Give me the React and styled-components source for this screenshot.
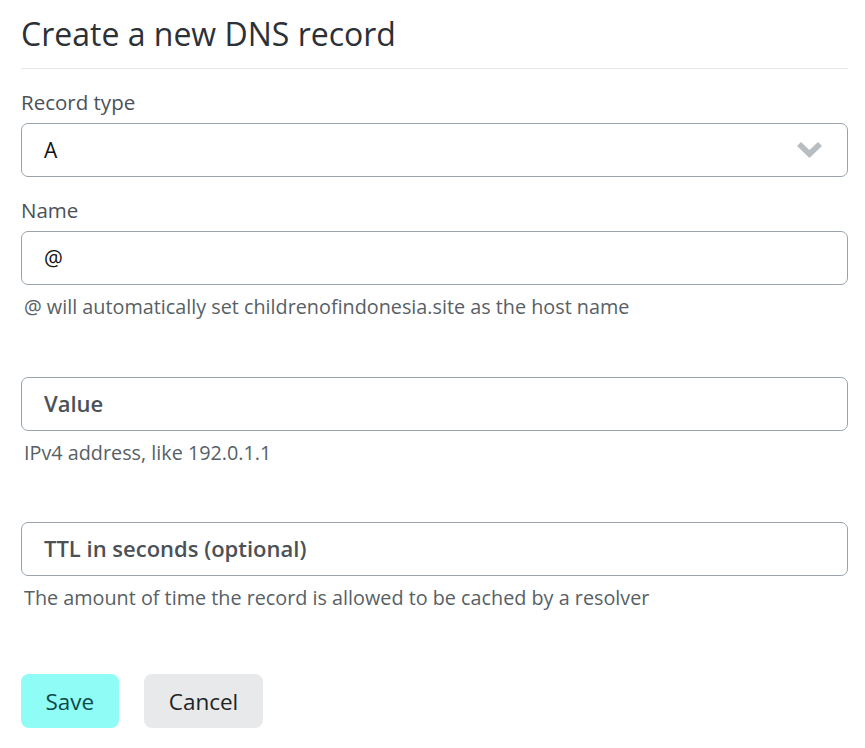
import React from "react";
import styled, { createGlobalStyle } from "styled-components";

const GlobalStyle = createGlobalStyle`
  body {
    margin: 0;
    background: #fff;
    font-family: "Open Sans", "Noto Sans", sans-serif;
  }
`;

const Page = styled.div`
  padding: 12px 17px 20px 21px;
`;

const Heading = styled.h1`
  margin: 0;
  font-size: 32px;
  font-weight: 500;
  color: #2b3136;
  padding-bottom: 13px;
  border-bottom: 1px solid #e5e7eb;
`;

const Form = styled.form`
  display: flex;
  flex-direction: column;
  margin-top: 19px;
`;

const Field = styled.div`
  display: flex;
  flex-direction: column;
  margin-bottom: ${(props) => props.gap || "0px"};
`;

const Label = styled.label`
  font-size: 20.5px;
  color: #4b5157;
  margin-bottom: 7px;
  line-height: 28px;
`;

const SelectBox = styled.div`
  height: 54px;
  box-sizing: border-box;
  border: 1px solid #9aa3ad;
  border-radius: 7px;
  display: flex;
  align-items: center;
  justify-content: space-between;
  padding: 0 24px 0 22px;
  font-size: 21px;
  color: #111;
  margin-bottom: 19px;
`;

const Chevron = styled.svg`
  width: 27px;
  height: 16px;
`;

const Input = styled.input`
  height: 54px;
  box-sizing: border-box;
  border: 1px solid #9aa3ad;
  border-radius: 7px;
  padding: 0 22px;
  font-family: inherit;
  font-size: 21px;
  color: #111;
  outline: none;
  &::placeholder {
    color: #4b5157;
    font-weight: 600;
    font-size: 22px;
  }
`;

const Help = styled.p`
  margin: 9px 0 0 3px;
  font-size: 19.8px;
  color: #585f66;
  line-height: 26px;
`;

const Buttons = styled.div`
  display: flex;
  gap: 25px;
  margin-top: 63px;
`;

const Button = styled.button`
  height: 54px;
  border: none;
  border-radius: 8px;
  padding: 0 ${(props) => (props.primary ? "24.5px" : "25px")};
  font-family: inherit;
  font-size: 22.5px;
  font-weight: 500;
  background: ${(props) => (props.primary ? "#8ffcf5" : "#e8e9eb")};
  color: ${(props) => (props.primary ? "#0d4a4a" : "#1f2326")};
`;

export default function App() {
  return (
    <Page>
      <GlobalStyle />
      <Heading>Create a new DNS record</Heading>
      <Form onSubmit={(e) => e.preventDefault()}>
        <Field>
          <Label>Record type</Label>
          <SelectBox>
            <span>A</span>
            <Chevron viewBox="0 0 27 16">
              <path d="M1 4 L5 0 L13.5 8 L22 0 L26 4 L13.5 16 Z" fill="#b8bdc2" />
            </Chevron>
          </SelectBox>
        </Field>
        <Field gap="57px">
          <Label>Name</Label>
          <Input defaultValue="@" />
          <Help>@ will automatically set childrenofindonesia.site as the host name</Help>
        </Field>
        <Field gap="56px">
          <Input placeholder="Value" />
          <Help>IPv4 address, like 192.0.1.1</Help>
        </Field>
        <Field>
          <Input placeholder="TTL in seconds (optional)" />
          <Help>The amount of time the record is allowed to be cached by a resolver</Help>
        </Field>
        <Buttons>
          <Button primary>Save</Button>
          <Button>Cancel</Button>
        </Buttons>
      </Form>
    </Page>
  );
}
